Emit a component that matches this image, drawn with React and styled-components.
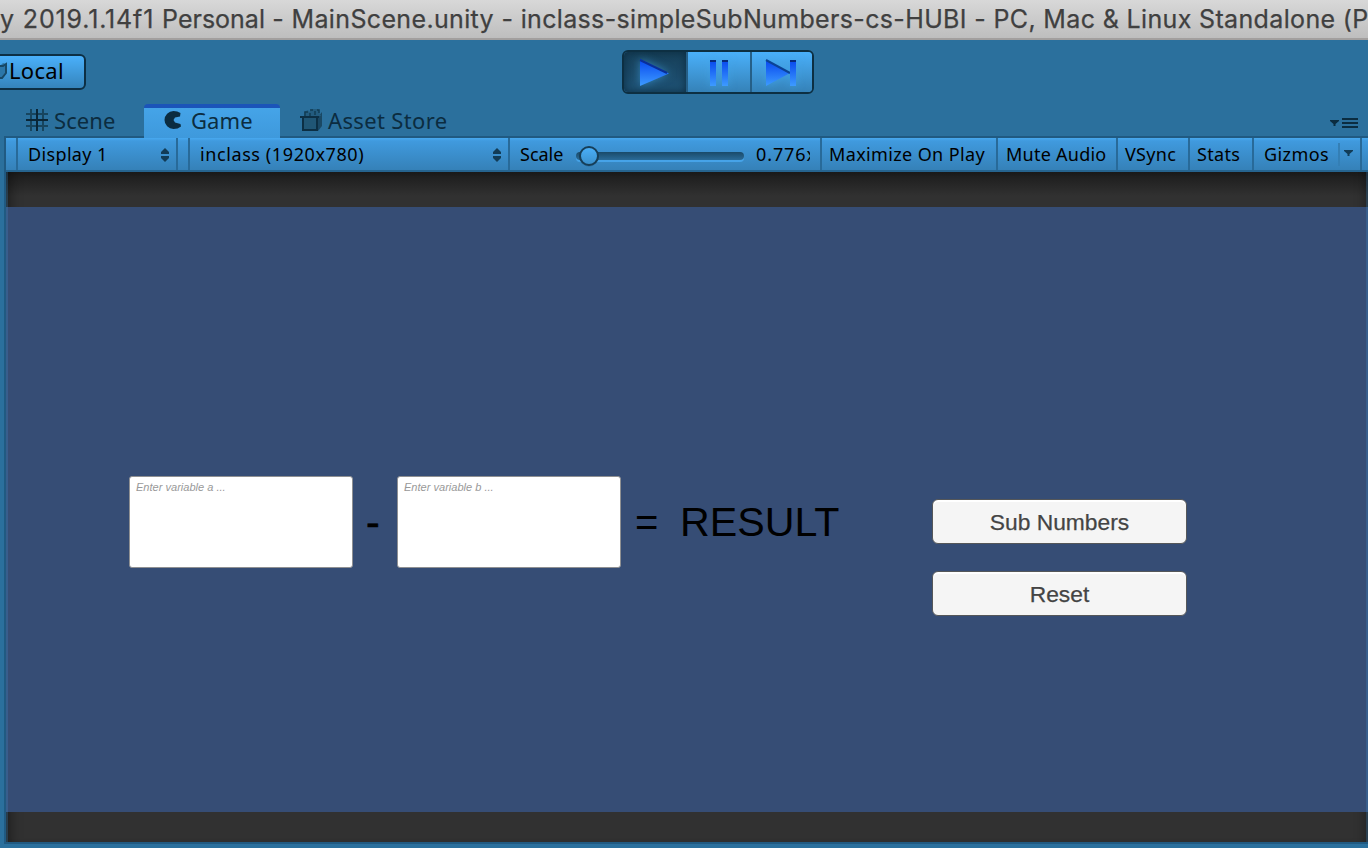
import React from "react";
import styled, { createGlobalStyle } from "styled-components";

const GlobalStyle = createGlobalStyle`
  * { box-sizing: border-box; }
  html, body { margin: 0; overflow: hidden; }
  body { background: #2b709d; }
`;

const Window = styled.div`
  width: 1368px;
  height: 848px;
  display: flex;
  flex-direction: column;
  overflow: hidden;
  background: #2b709d;
  font-family: "Noto Sans", sans-serif;
  color: #000;
`;

const TitleBar = styled.header`
  flex: none;
  height: 40px;
  border-bottom: 2px solid #a29f9e;
  background: linear-gradient(#d8d8d8, #bebebe);
  overflow: hidden;
  white-space: nowrap;
  font-family: Inter, sans-serif;
  font-size: 25px;
  line-height: 38px;
  color: #404040;
  -webkit-text-stroke: 0.25px #404040;
`;

const TitlePart = styled.span`
  letter-spacing: ${(p) => p.$tracking}px;
`;

const Toolbar = styled.div`
  flex: none;
  height: 64px;
  display: grid;
  grid-template-columns: 86px 192px;
  justify-content: start;
  column-gap: 536px;
  padding-top: 10px;
`;

const LocalButton = styled.button`
  height: 36px;
  margin: 4px 0 0 -12px;
  padding: 0 0 0 8px;
  display: flex;
  align-items: flex-start;
  border: 2px solid #0d2f44;
  border-radius: 6px;
  background: linear-gradient(#4ab0fb, #3584bb);
  font: 22px/28px "Noto Sans", sans-serif;
  letter-spacing: 0.3px;
  color: #000;
  svg { flex: none; width: 11px; }
`;

const PlayGroup = styled.div`
  height: 44px;
  display: grid;
  grid-template-columns: 64px 64px 60px;
  border: 2px solid #0d2f42;
  border-radius: 6px;
  overflow: hidden;
  background: #3b8fca;
`;

const PlayControl = styled.button`
  padding: 0;
  border: 0;
  border-right: ${(p) => (p.$last ? "0" : "2px solid #255f87")};
  background: ${(p) =>
    p.$active ? "linear-gradient(#174059, #1f5376)" : "linear-gradient(#4ab0fa, #3582b8)"};
  box-shadow: ${(p) => (p.$active ? "inset 0 0 9px #0c2d42" : "none")};
  display: flex;
  svg { display: block; filter: drop-shadow(0 0 4px #3fa7ed99); }
`;

const Tabs = styled.nav`
  flex: none;
  height: 32px;
  display: grid;
  grid-template-columns: 118px 136px 1fr 38px;
  padding-left: 26px;
`;

const Tab = styled.div`
  display: flex;
  padding-left: ${(p) => p.$inset}px;
  font-size: 22px;
  line-height: 30px;
  letter-spacing: ${(p) => p.$tracking}px;
  color: #0b2c40;
  ${(p) =>
    p.$active &&
    `background: linear-gradient(#1b54b9 4px, #45a4e8 4px, #3e99dc);
     border-radius: 4px 4px 0 0;
     margin-bottom: -2px;
     position: relative;
     z-index: 1;`}
  svg { flex: none; display: block; margin-right: ${(p) => p.$gap}px; }
`;

const TabLabel = styled.span`
  padding-top: 1px;
`;

const PaneMenu = styled.div`
  padding-top: 12px;
  svg { display: block; }
`;

const Pane = styled.section`
  flex: none;
  height: 708px;
  margin-left: 4px;
  border: 2px solid #205a82;
  border-right: 0;
  display: flex;
  flex-direction: column;
`;

const GameBar = styled.div`
  flex: none;
  height: 34px;
  display: grid;
  grid-template-columns: 12px 160px 12px 320px 312px 176px 120px 72px 64px 108px 1fr;
  border-bottom: 2px solid #26648f;
  background: linear-gradient(#48a9f0, #409ade 3px, #3581b8);
  font-size: 18px;
  line-height: 32px;
`;

const Cell = styled.div`
  display: flex;
  white-space: nowrap;
  overflow: hidden;
  padding-left: ${(p) => p.$inset || 0}px;
  border-right: ${(p) => (p.$last ? "0" : "2px solid #286a99")};
  letter-spacing: ${(p) => p.$tracking || 0}px;
`;

const Arrows = styled.svg`
  display: block;
  flex: none;
  margin: 10px 6px 0 auto;
`;

const SliderArt = styled.svg`
  display: block;
  flex: none;
  margin-left: 13px;
`;

const ScaleLabel = styled.span`
  flex: none;
  width: 43px;
`;

const ScaleValue = styled.span`
  width: 54px;
  margin-left: 10px;
  overflow: hidden;
  letter-spacing: 0.9px;
`;

const GizmoArrow = styled.span`
  margin: 5px 0 4px auto;
  width: 22px;
  border-left: 2px solid #347fb5;
  svg { display: block; }
`;

const Viewport = styled.div`
  position: relative;
  flex: none;
  height: 670px;
  padding: 35px 0 30px;
  background: linear-gradient(#1b1b1b, #313131 24px);
  box-shadow: inset 14px 0 14px -12px #0008, inset -12px 0 12px -10px #0006;
  &::after {
    content: "";
    position: absolute;
    inset: 0;
    border: 0 solid #3f94d440;
    border-width: 0 2px;
    pointer-events: none;
  }
`;

const Game = styled.main`
  height: 605px;
  display: grid;
  grid-template-columns: 224px 44px 224px 59px 252px 255px;
  justify-content: start;
  padding: 269px 0 0 123px;
  background: #364d75;
  font-family: "Liberation Sans", Arial, sans-serif;
`;

const Field = styled.div`
  height: 92px;
  padding: 4px 6px;
  border: 1px solid #8f9092;
  border-radius: 3px;
  background: #fff;
  font-size: 11.05px;
  line-height: 12px;
  font-style: italic;
  color: #999;
  white-space: nowrap;
`;

const Operator = styled.div`
  font-size: ${(p) => p.$size || 41}px;
  line-height: 92px;
  padding-left: ${(p) => p.$inset}px;
  -webkit-text-stroke: ${(p) => p.$stroke || 0}px #000;
`;

const Actions = styled.div`
  display: grid;
  grid-auto-rows: 45px;
  row-gap: 27px;
  padding-top: 23px;
`;

const GameButton = styled.button`
  padding: 1px 0 0;
  border: 1px solid #555759;
  border-radius: 6px;
  background: #f5f5f5;
  box-shadow: inset 0 2px 0 #fff;
  font: 22.8px/42px "Liberation Sans", Arial, sans-serif;
  color: #444;
  -webkit-text-stroke: 0.25px #444;
`;

const HashIcon = () => (
  <svg width="22" height="32" viewBox="0 0 22 32">
    <path d="M5 5v22M17 5v22M0 10h22M0 22h22" stroke="#17455f" strokeWidth="2" fill="none" />
    <path d="M11 5v22M0 16h22" stroke="#0a2637" strokeWidth="2" fill="none" />
  </svg>
);

const PacIcon = () => (
  <svg width="18" height="32" viewBox="0 0 18 32">
    <path d="M16.500 9Q13.500 7 9.500 7A9 9 0 0 0 9.500 25Q14 25 17 22.500L16.500 20 11 18.500 9.500 16 11 13.500 16 12.500Z" fill="#0b2c40" />
  </svg>
);

const StoreIcon = () => (
  <svg width="22" height="32" viewBox="0 0 22 32">
    <path d="M18 13l4-5v14l-4 5z" fill="#1a4864" />
    <path d="M4 12V8l4-2 1 2 3-3h6l1 3 2 4z" fill="#235c7f" />
    <path d="M3 14h14v12H3z" fill="#205675" />
    <path d="M3 13v13h14V13" stroke="#0c2f44" strokeWidth="2" fill="none" />
    <path d="M0 13h19" stroke="#0c2f44" strokeWidth="2" fill="none" />
    <path d="M5 12V8h3M10 12V9M10 6h3M15 11V7M17 6h2v3" stroke="#123c54" strokeWidth="1.500" fill="none" />
  </svg>
);

const UpDown = () => (
  <Arrows width="10" height="14" viewBox="0 0 10 14">
    <path d="M5 0l4 4v2H1V4zM5 14l4-4V8H1v2z" fill="#123c57" />
  </Arrows>
);

export default function App() {
  return (
    <Window>
      <GlobalStyle />
      <TitleBar>
        <TitlePart $tracking={0.85}>y 2019.1.14f1 </TitlePart>
        <TitlePart $tracking={0}>Personal</TitlePart>
        <TitlePart $tracking={0.35}>
          {" - MainScene.unity - inclass-simpleSubNumbers-cs-HUBI - PC, Mac & Linux Standalone (Personal)"}
        </TitlePart>
      </TitleBar>
      <Toolbar>
        <LocalButton>
          <svg height="30" viewBox="0 0 11 30">
            <path d="M1 11l4-4 3 1v10l-4 5H1z" fill="#2b76a8" />
            <path d="M2 10h3l3-2v9l-4 5H1" stroke="#174866" strokeWidth="2" fill="none" />
          </svg>
          Local
        </LocalButton>
        <PlayGroup>
          <PlayControl $active>
            <svg width="62" height="40" viewBox="0 0 62 40">
              <defs>
                <linearGradient id="ink" x1="0" y1="0" x2="0" y2="1">
                  <stop offset="0" stopColor="#0747ee" />
                  <stop offset="1" stopColor="#3d9bff" />
                </linearGradient>
              </defs>
              <path d="M16 7L45 21.500 16 34z" fill="url(#ink)" />
              <path d="M16 8L43 21" stroke="#0a2f98" strokeWidth="2" />
            </svg>
          </PlayControl>
          <PlayControl>
            <svg width="62" height="40" viewBox="0 0 62 40">
              <path d="M22 8h6v26h-6zM34 8h6v26h-6z" fill="url(#ink)" />
              <path d="M22 9h6M34 9h6" stroke="#062a7c" strokeWidth="2" />
            </svg>
          </PlayControl>
          <PlayControl $last>
            <svg width="60" height="40" viewBox="0 0 60 40">
              <path d="M14 8L38 21 14 34z" fill="url(#ink)" />
              <path d="M14 8L38 21" stroke="#0b4395" strokeWidth="2" />
              <path d="M38 8h6v26h-6z" fill="url(#ink)" />
              <path d="M38 9h6" stroke="#062a7c" strokeWidth="2" />
            </svg>
          </PlayControl>
        </PlayGroup>
      </Toolbar>
      <Tabs>
        <Tab $inset={0} $gap={6} $tracking={0.1}>
          <HashIcon />
          <TabLabel>Scene</TabLabel>
        </Tab>
        <Tab $active $inset={20} $gap={9} $tracking={0.1}>
          <PacIcon />
          <TabLabel>Game</TabLabel>
        </Tab>
        <Tab $inset={20} $gap={6} $tracking={0.35}>
          <StoreIcon />
          <TabLabel>Asset Store</TabLabel>
        </Tab>
        <PaneMenu>
          <svg width="30" height="16" viewBox="0 0 30 16">
            <path d="M0 4h9v1L5.500 8v2h-2V8L0 5z" fill="#0b2c40" />
            <path d="M12 3h16M12 7h16M12 11h16" stroke="#0b2c40" strokeWidth="2" />
          </svg>
        </PaneMenu>
      </Tabs>
      <Pane>
        <GameBar>
          <Cell />
          <Cell $inset={10} $tracking={0.35}>Display 1<UpDown /></Cell>
          <Cell />
          <Cell $inset={10} $tracking={0.6}>inclass (1920x780)<UpDown /></Cell>
          <Cell $inset={10}>
            <ScaleLabel>Scale</ScaleLabel>
            <SliderArt width="170" height="32" viewBox="0 0 170 32">
              <defs>
                <linearGradient id="track" x1="0" y1="0" x2="0" y2="1">
                  <stop offset="0" stopColor="#1a4a69" />
                  <stop offset="1" stopColor="#2a6b98" />
                </linearGradient>
                <linearGradient id="knob" x1="0" y1="0" x2="0" y2="1">
                  <stop offset="0" stopColor="#4ab0fa" />
                  <stop offset="1" stopColor="#3a8fca" />
                </linearGradient>
              </defs>
              <rect x="0" y="15" width="168" height="9" rx="4" fill="#46a3e8" />
              <rect x="0" y="14" width="168" height="8" rx="4" fill="url(#track)" />
              <circle cx="13" cy="18.500" r="9" fill="none" stroke="#163e5855" strokeWidth="2" />
              <circle cx="13" cy="18" r="9" fill="url(#knob)" stroke="#163e58" strokeWidth="2" />
            </SliderArt>
            <ScaleValue>0.776x</ScaleValue>
          </Cell>
          <Cell $inset={7} $tracking={0.37}>Maximize On Play</Cell>
          <Cell $inset={8} $tracking={0.25}>Mute Audio</Cell>
          <Cell $inset={7} $tracking={0.3}>VSync</Cell>
          <Cell $inset={7} $tracking={0.3}>Stats</Cell>
          <Cell $inset={10} $tracking={0.4}>
            Gizmos
            <GizmoArrow>
              <svg width="18" height="22" viewBox="0 0 18 22">
                <path d="M4 7h9v1L9.500 11v2h-2v-2L4 8z" fill="#123c57" />
              </svg>
            </GizmoArrow>
          </Cell>
          <Cell $last />
        </GameBar>
        <Viewport>
          <Game>
            <Field>Enter variable a ...</Field>
            <Operator $inset={13} $stroke={0.6}>-</Operator>
            <Field>Enter variable b ...</Field>
            <Operator $inset={14} $size={40}>=</Operator>
            <Operator $inset={0} $size={41.2}>RESULT</Operator>
            <Actions>
              <GameButton>Sub Numbers</GameButton>
              <GameButton>Reset</GameButton>
            </Actions>
          </Game>
        </Viewport>
      </Pane>
    </Window>
  );
}
